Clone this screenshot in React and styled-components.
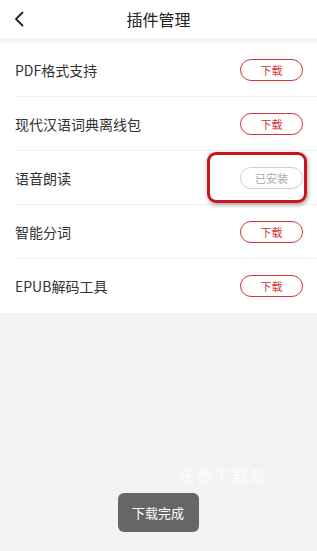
import React from 'react';
import styled, { createGlobalStyle } from 'styled-components';

const GlobalStyle = createGlobalStyle`
  html, body {
    margin: 0;
    padding: 0;
    background: #f4f3f2;
  }
  body {
    font-family: "Noto Sans CJK SC", "Noto Sans", sans-serif;
  }
`;

const plugins = [
  { name: 'PDF格式支持', installed: false },
  { name: '现代汉语词典离线包', installed: false },
  { name: '语音朗读', installed: true },
  { name: '智能分词', installed: false },
  { name: 'EPUB解码工具', installed: false },
];

function App() {
  return (
    <Page>
      <GlobalStyle />
      <Header>
        <BackButton aria-label="返回">
          <svg width="10" height="16" viewBox="0 0 10 16">
            <path d="M8.5 1.5 L2 8 L8.5 14.5" fill="none" stroke="#222" strokeWidth="1.8" strokeLinecap="round" strokeLinejoin="round" />
          </svg>
        </BackButton>
        <Title>插件管理</Title>
      </Header>

      <List>
        {plugins.map((p, i) => (
          <Row key={p.name} last={i === plugins.length - 1}>
            <Name>{p.name}</Name>
            <ActionWrap highlight={p.installed}>
              <Action installed={p.installed}>{p.installed ? '已安装' : '下载'}</Action>
            </ActionWrap>
          </Row>
        ))}
      </List>

      <Bottom>
        <Watermark>沃德下载站</Watermark>
        <Toast>下载完成</Toast>
      </Bottom>
    </Page>
  );
}

export default App;

const Page = styled.div`
  width: 317px;
  height: 551px;
  display: flex;
  flex-direction: column;
  background: #f4f3f2;
  overflow: hidden;
`;

const Header = styled.header`
  position: relative;
  height: 38px;
  background: #fff;
  display: flex;
  align-items: center;
  justify-content: center;
  border-bottom: 5px solid #f5f5f5;
`;

const BackButton = styled.button`
  position: absolute;
  left: 14px;
  top: 11px;
  border: 0;
  padding: 0;
  background: none;
  display: flex;
`;

const Title = styled.h1`
  margin: 0;
  font-size: 16px;
  font-weight: 400;
  color: #222;
`;

const List = styled.ul`
  margin: 0;
  padding: 0 0 0 15px;
  list-style: none;
  background: #fff;
`;

const Row = styled.li`
  height: 54px;
  box-sizing: border-box;
  display: flex;
  align-items: center;
  justify-content: space-between;
  padding-right: 14px;
  border-bottom: ${p => (p.last ? 'none' : '1px solid #f0f0f0')};
`;

const Name = styled.span`
  font-size: 14px;
  color: #333;
`;

const ActionWrap = styled.div`
  display: flex;
  align-items: center;
  justify-content: flex-end;
  box-sizing: border-box;
  width: ${p => (p.highlight ? '100px' : 'auto')};
  height: ${p => (p.highlight ? '51px' : 'auto')};
  margin-right: ${p => (p.highlight ? '-4px' : '0')};
  padding-right: ${p => (p.highlight ? '1px' : '0')};
  border: ${p => (p.highlight ? '3px solid #c8161d' : 'none')};
  border-radius: 9px;
  box-shadow: ${p => (p.highlight ? '1px 2px 4px rgba(0,0,0,0.35)' : 'none')};
`;

const Action = styled.span`
  width: 63px;
  height: 22px;
  box-sizing: border-box;
  display: flex;
  align-items: center;
  justify-content: center;
  border-radius: 11px;
  font-size: 11px;
  border: 1px solid ${p => (p.installed ? '#cfcfcf' : '#d2363a')};
  color: ${p => (p.installed ? '#a8a8a8' : '#d2363a')};
`;

const Bottom = styled.div`
  flex: 1;
  display: flex;
  flex-direction: column;
  align-items: center;
  justify-content: flex-end;
  padding-bottom: 19px;
`;

const Watermark = styled.div`
  align-self: flex-end;
  margin-right: 49px;
  margin-bottom: 6px;
  font-size: 16px;
  letter-spacing: 2px;
  color: rgba(255, 255, 255, 0.75);
`;

const Toast = styled.div`
  width: 81px;
  height: 39px;
  margin-right: 1px;
  display: flex;
  align-items: center;
  justify-content: center;
  background: #666;
  border-radius: 6px;
  color: #fff;
  font-size: 13px;
`;
